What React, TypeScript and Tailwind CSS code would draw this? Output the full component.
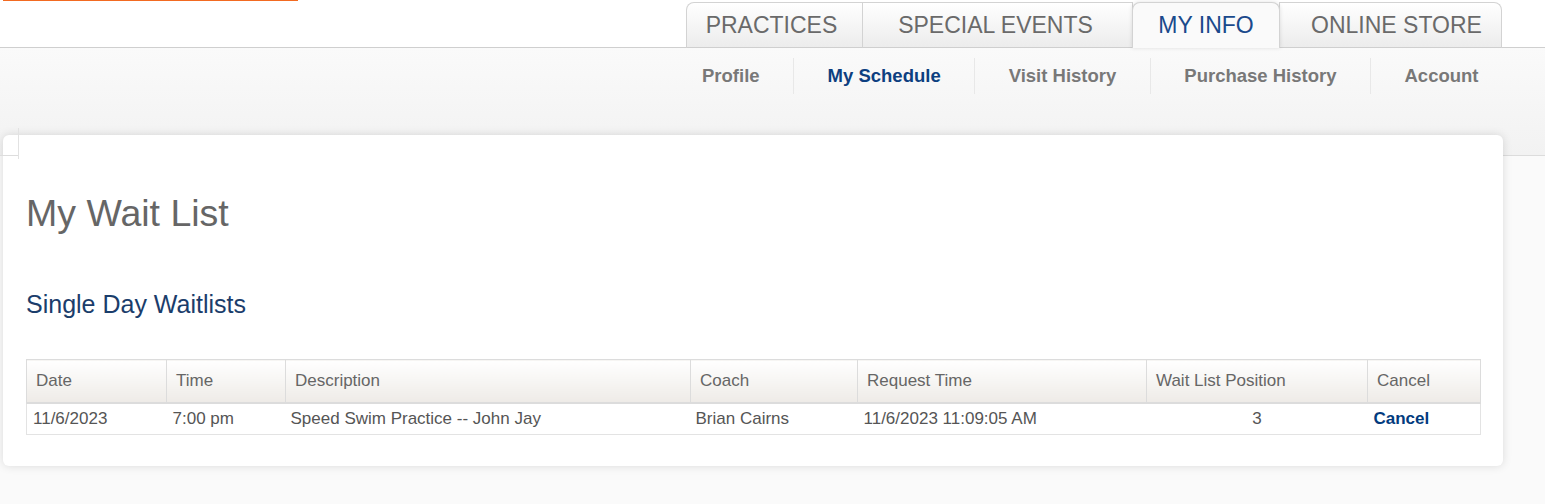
const tabs = [
  { label: 'PRACTICES', w: 'w-[177px] pr-[6px]', round: 'rounded-tl-[8px]' },
  { label: 'SPECIAL EVENTS', w: 'w-[271px] pr-[4px]', round: '' },
  { label: 'MY INFO', w: 'w-[148px]', round: 'rounded-t-[8px]', active: true },
  { label: 'ONLINE STORE', w: 'w-[223px] pl-[12px]', round: 'rounded-tr-[8px]' },
];

const subnav = [
  { label: 'Profile' },
  { label: 'My Schedule', active: true },
  { label: 'Visit History' },
  { label: 'Purchase History' },
  { label: 'Account' },
];

const columns = [
  { label: 'Date', w: 'w-[140px]' },
  { label: 'Time', w: 'w-[119px]' },
  { label: 'Description', w: 'w-[405px]' },
  { label: 'Coach', w: 'w-[167px]' },
  { label: 'Request Time', w: 'w-[289px]' },
  { label: 'Wait List Position', w: 'w-[221px]' },
  { label: 'Cancel', w: 'w-[113px]' },
];

export default function App() {
  return (
    <div className="min-h-screen bg-[#fafafa] font-['Liberation_Sans',Arial,sans-serif]">
      {/* top bar */}
      <div className="flex h-[48px] justify-between border-b border-[#cfcfcf] bg-white">
        <div className="ml-[3px] h-px w-[295px] bg-[#f26a21]" />
        <div className="mb-[-1px] flex items-end pr-[43px]">
          {tabs.map((t) => (
            <div
              key={t.label}
              className={`-ml-px flex h-[46px] items-center justify-center border border-[#d3d3d3] text-[23px] ${t.w} ${t.round} ${
                t.active
                  ? 'relative z-10 border-b-0 bg-[#fafafa] text-[#1a4a8c] shadow-[0_0_4px_rgba(0,0,0,0.12)]'
                  : 'border-b-[#cfcfcf] bg-linear-to-b from-white to-[#ececec] text-[#6a6a6a]'
              }`}
            >
              {t.label}
            </div>
          ))}
        </div>
      </div>

      {/* sub navigation */}
      <div className="h-[108px] border-b border-[#dcdcdc] bg-linear-to-b from-[#fafafa] to-[#f2f2f2]">
        <div className="flex justify-end pr-[33px] pt-[10px]">
          {subnav.map((s, i) => (
            <div
              key={s.label}
              className={`flex h-[36px] items-center px-[33.5px] text-[18.5px] font-bold ${
                i > 0 ? 'border-l border-[#e8e8e8]' : ''
              } ${s.active ? 'text-[#0d3f80]' : 'text-[#787878]'}`}
            >
              {s.label}
            </div>
          ))}
        </div>
      </div>

      {/* content card */}
      <div className="relative -mt-[21px] ml-[3px] w-[1500px] rounded-[6px] bg-white px-[23px] pb-[31px] pt-[56px] shadow-[0_0_10px_rgba(0,0,0,0.13)]">
        <div className="absolute left-[15px] top-[-7px] h-[31px] w-px bg-[#e2e2e2]" />
        <div className="absolute left-[-3px] top-[20px] h-px w-[18px] bg-[#dddddd]" />

        <h1 className="text-[37.5px] leading-[44px] text-[#666666]">My Wait List</h1>
        <h2 className="mt-[55px] text-[25px] leading-[28px] text-[#1b3d6b]">Single Day Waitlists</h2>

        <table className="mt-[41px] w-full table-fixed border-collapse border border-[#e3e3e3] text-[17px]">
          <thead>
            <tr>
              {columns.map((c) => (
                <th
                  key={c.label}
                  className={`h-[43px] border border-b-2 border-[#dcdcdc] bg-linear-to-b from-white to-[#eeebe7] pl-[9px] text-left font-normal text-[#666666] ${c.w}`}
                >
                  {c.label}
                </th>
              ))}
            </tr>
          </thead>
          <tbody>
            <tr className="text-[#555555]">
              <td className="h-[32px] px-[6px]">11/6/2023</td>
              <td className="px-[6px]">7:00 pm</td>
              <td className="px-[5px]">Speed Swim Practice -- John Jay</td>
              <td className="px-[5px]">Brian Cairns</td>
              <td className="px-[6px]">11/6/2023 11:09:05 AM</td>
              <td className="text-center">3</td>
              <td className="px-[6px] font-bold text-[#023b7e]">Cancel</td>
            </tr>
          </tbody>
        </table>
      </div>
    </div>
  );
}
